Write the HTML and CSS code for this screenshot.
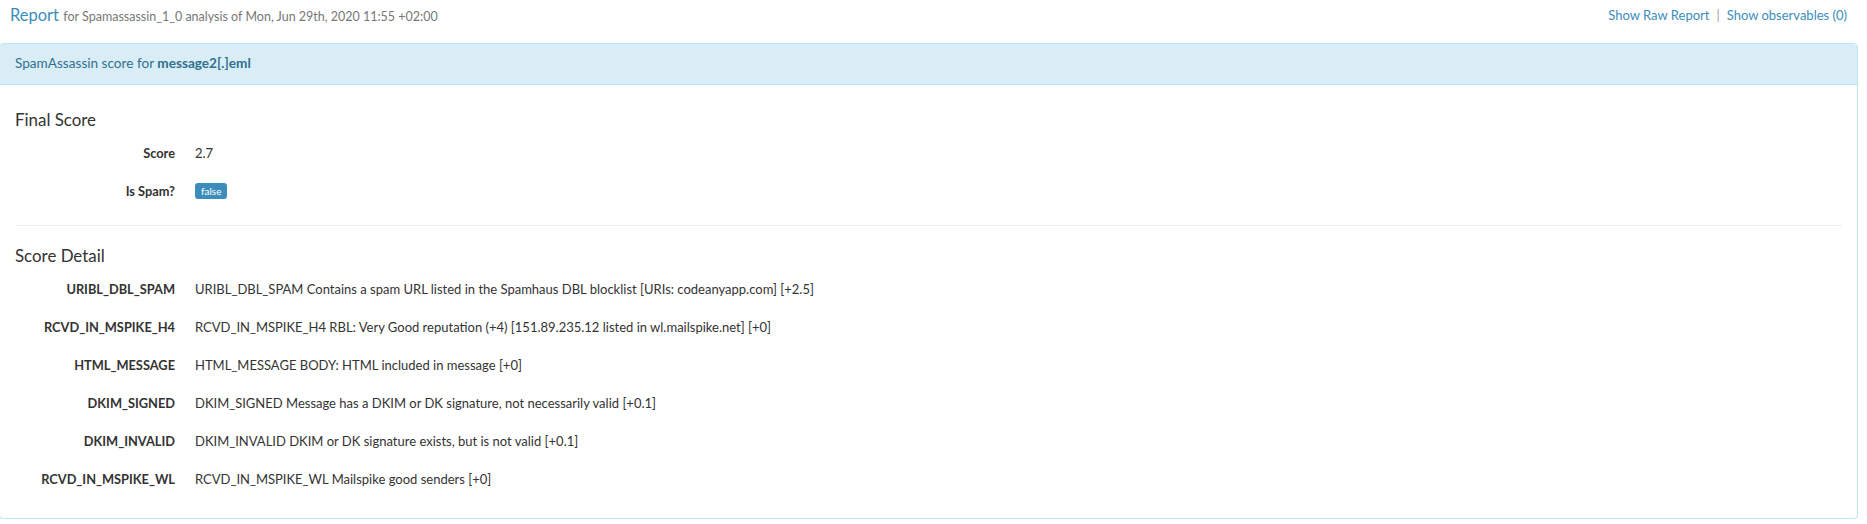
FILE: index.html
```html
<!DOCTYPE html>
<html>
<head>
<meta charset="utf-8">
<link rel="stylesheet" href="styles.css">
</head>
<body>
<div class="page">
  <div class="topbar">
    <div class="title"><span class="report">Report</span> <small>for Spamassassin_1_0 analysis of Mon, Jun 29th, 2020 11:55 +02:00</small></div>
    <div class="links"><a>Show Raw Report</a><span class="sep">|</span><a>Show observables (0)</a></div>
  </div>
  <div class="panel">
    <div class="panel-heading">SpamAssassin score for <strong>message2[.]eml</strong></div>
    <div class="panel-body">
      <h4 class="section-title">Final Score</h4>
      <dl class="dl">
        <div class="row"><dt>Score</dt><dd>2.7</dd></div>
        <div class="row"><dt>Is Spam?</dt><dd><span class="badge">false</span></dd></div>
      </dl>
      <div class="divider"></div>
      <h4 class="section-title detail">Score Detail</h4>
      <dl class="dl">
        <div class="row"><dt>URIBL_DBL_SPAM</dt><dd>URIBL_DBL_SPAM Contains a spam URL listed in the Spamhaus DBL blocklist [URIs: codeanyapp.com] [+2.5]</dd></div>
        <div class="row"><dt>RCVD_IN_MSPIKE_H4</dt><dd>RCVD_IN_MSPIKE_H4 RBL: Very Good reputation (+4) [151.89.235.12 listed in wl.mailspike.net] [+0]</dd></div>
        <div class="row"><dt>HTML_MESSAGE</dt><dd>HTML_MESSAGE BODY: HTML included in message [+0]</dd></div>
        <div class="row"><dt>DKIM_SIGNED</dt><dd>DKIM_SIGNED Message has a DKIM or DK signature, not necessarily valid [+0.1]</dd></div>
        <div class="row"><dt>DKIM_INVALID</dt><dd>DKIM_INVALID DKIM or DK signature exists, but is not valid [+0.1]</dd></div>
        <div class="row"><dt>RCVD_IN_MSPIKE_WL</dt><dd>RCVD_IN_MSPIKE_WL Mailspike good senders [+0]</dd></div>
      </dl>
    </div>
  </div>
</div>
</body>
</html>
```
FILE: styles.css
```css
html, body {
  margin: 0;
  padding: 0;
  background: #ffffff;
}
body {
  font-family: "Lato", "Liberation Sans", sans-serif;
  font-size: 13px;
  line-height: 20px;
  color: #333333;
}
.page {
  padding: 0 9px 0 0;
}
.topbar {
  display: flex;
  justify-content: space-between;
  align-items: flex-start;
  height: 24px;
  padding: 3px 11px 0 10px;
  margin-bottom: 16px;
}
.title {
  white-space: nowrap;
  font-size: 16.5px;
  line-height: 24px;
}
.report {
  color: #3c8dbc;
}
.title small {
  font-size: 12.5px;
  color: #777777;
}
.links {
  font-size: 13px;
  line-height: 24px;
  white-space: nowrap;
}
.links a {
  color: #3c8dbc;
}
.sep {
  color: #a0a0a0;
  margin: 0 7px;
}
.panel {
  margin-left: -1px;
  border: 1px solid #bce8f1;
  border-radius: 4px;
  box-shadow: 0 1px 1px rgba(0, 0, 0, 0.05);
  background: #ffffff;
}
.panel-heading {
  background: #d9edf7;
  color: #31708f;
  font-size: 13.6px;
  border-bottom: 1px solid #bce8f1;
  padding: 9px 15px 11px 15px;
  border-radius: 3px 3px 0 0;
}
.panel-heading strong {
  font-weight: 700;
}
.panel-body {
  padding: 15px 15px 29px 15px;
}
.section-title {
  font-size: 16.9px;
  font-weight: 400;
  line-height: 20px;
  margin: 10px 0 13px 0;
  color: #333333;
}
.section-title.detail {
  margin-top: 20px;
}
.dl {
  margin: 0;
}
.row {
  display: flex;
  align-items: center;
  height: 20px;
  margin-bottom: 18px;
}
.row:last-child {
  margin-bottom: 0;
}
.row dt {
  width: 160px;
  flex: none;
  text-align: right;
  font-size: 12.8px;
  font-weight: 700;
  white-space: nowrap;
}
.row dd {
  display: flex;
  align-items: center;
  height: 20px;
  margin: 0 0 0 20px;
  white-space: nowrap;
}
.badge {
  display: block;
  background: #3c8dbc;
  color: #ffffff;
  font-size: 10px;
  line-height: 16px;
  height: 16px;
  padding: 0 6px;
  border-radius: 3px;
}
.divider {
  border-top: 1px solid #eeeeee;
  margin: 24px 0 0 0;
}
```
